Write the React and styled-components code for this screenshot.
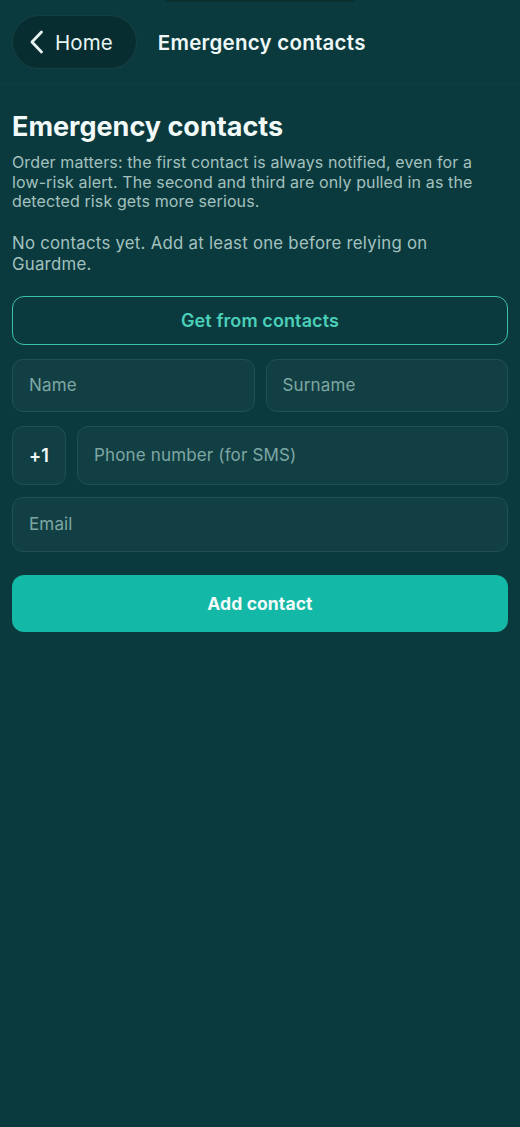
import React from "react";
import styled, { createGlobalStyle } from "styled-components";

const Global = createGlobalStyle`
  html, body { margin: 0; padding: 0; background: #0b3a3e; }
  body { font-family: Inter, "Noto Sans", sans-serif; -webkit-font-smoothing: antialiased; }
  * { box-sizing: border-box; }
`;

const Screen = styled.div`
  min-height: 1127px;
  background: #0b3a3e;
  display: flex;
  flex-direction: column;
`;

const Notch = styled.div`
  height: 2px;
  width: 190px;
  margin: 0 auto;
  background: #08302f;
  border-radius: 0 0 2px 2px;
`;

const Header = styled.header`
  display: flex;
  align-items: center;
  gap: 21px;
  padding: 13px 12px 15px;
  border-bottom: 1px solid rgba(255, 255, 255, 0.02);
`;

const BackPill = styled.button`
  display: flex;
  align-items: center;
  gap: 11px;
  height: 54px;
  padding: 0 23px 0 16px;
  border-radius: 27px;
  background: #082d30;
  border: 1px solid rgba(120, 200, 190, 0.12);
  color: #e6f4f2;
  font-family: inherit;
  font-size: 20.5px;
  font-weight: 400;
  letter-spacing: 0.1px;
  cursor: pointer;
`;

const HeaderTitle = styled.div`
  color: #eef8f6;
  font-size: 20.5px;
  font-weight: 600;
  letter-spacing: 0.25px;
`;

const Content = styled.main`
  padding: 25px 12px 0;
  display: flex;
  flex-direction: column;
`;

const H1 = styled.h1`
  margin: 0;
  color: #f2faf9;
  font-size: 27px;
  line-height: 33px;
  font-weight: 700;
  letter-spacing: 0px;
`;

const Para = styled.p`
  margin: 10px 0 0;
  color: #a3c1bf;
  font-size: 16px;
  line-height: 19.6px;
  font-weight: 400;
  letter-spacing: 0.12px;
`;

const Notice = styled.p`
  margin: 21px 0 0;
  max-width: 462px;
  color: #a3c1bf;
  font-size: 16.8px;
  line-height: 21px;
  font-weight: 400;
  letter-spacing: 0.25px;
`;

const OutlineButton = styled.button`
  margin-top: 21px;
  height: 49px;
  width: 100%;
  border-radius: 12px;
  border: 1.5px solid #3cc1ad;
  background: transparent;
  color: #4ccfb9;
  font-family: inherit;
  font-size: 18px;
  font-weight: 600;
  letter-spacing: 0.1px;
`;

const Row = styled.div`
  display: flex;
  gap: 11px;
  margin-top: ${(p) => p.$mt}px;
`;

const Field = styled.div`
  flex: ${(p) => (p.$fixed ? "0 0 54px" : "1 1 0")};
  height: ${(p) => p.$h}px;
  border-radius: 11px;
  background: #123f43;
  border: 1px solid #21504f;
  display: flex;
  align-items: center;
  justify-content: ${(p) => (p.$fixed ? "center" : "flex-start")};
  padding: ${(p) => (p.$fixed ? "0" : "0 16px")};
  color: ${(p) => (p.$fixed ? "#f2faf9" : "#7ea7a3")};
  font-size: ${(p) => (p.$fixed ? 18 : 17)}px;
  font-weight: ${(p) => (p.$fixed ? 600 : 400)};
  letter-spacing: 0.15px;
`;

const PrimaryButton = styled.button`
  margin-top: 23px;
  height: 57px;
  width: 100%;
  border: none;
  border-radius: 12px;
  background: #14b8a6;
  color: #f4fbfa;
  font-family: inherit;
  font-size: 17.5px;
  font-weight: 700;
  letter-spacing: 0.1px;
`;

const Chevron = () => (
  <svg width="15" height="24" viewBox="0 0 15 24" fill="none">
    <path d="M12.5 2L3 12l9.5 10" stroke="#e6f4f2" strokeWidth="2.8" strokeLinecap="round" strokeLinejoin="round" />
  </svg>
);

export default function App() {
  return (
    <>
      <Global />
      <Screen>
        <Notch />
        <Header>
          <BackPill>
            <Chevron />
            Home
          </BackPill>
          <HeaderTitle>Emergency contacts</HeaderTitle>
        </Header>
        <Content>
          <H1>Emergency contacts</H1>
          <Para>
            Order matters: the first contact is always notified, even for a low-risk alert. The second and third are only pulled in as the detected risk gets more serious.
          </Para>
          <Notice>No contacts yet. Add at least one before relying on Guardme.</Notice>
          <OutlineButton>Get from contacts</OutlineButton>
          <Row $mt={14}>
            <Field $h={53}>Name</Field>
            <Field $h={53}>Surname</Field>
          </Row>
          <Row $mt={14}>
            <Field $fixed $h={59}>+1</Field>
            <Field $h={59}>Phone number (for SMS)</Field>
          </Row>
          <Row $mt={12}>
            <Field $h={55}>Email</Field>
          </Row>
          <PrimaryButton>Add contact</PrimaryButton>
        </Content>
      </Screen>
    </>
  );
}
